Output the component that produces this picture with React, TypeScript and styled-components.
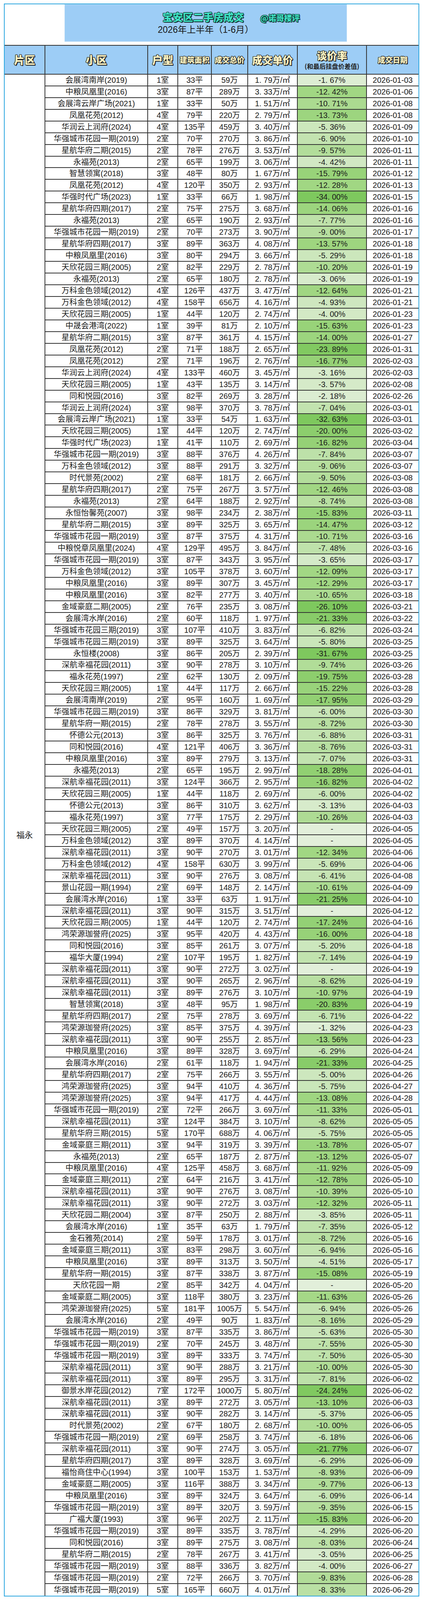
import React from 'react';
import styled, { createGlobalStyle } from 'styled-components';

// The browser window tops out at 4096px high and the photo is stretched to 4337,
// so every vertical size is laid out at 4096 / 4337 of its height in the picture.
const K = 4096 / 4337;
const v = (n: number) => `${(n * K).toFixed(2)}px`;

const GlobalStyle = createGlobalStyle`
  html, body {
    margin: 0;
    padding: 0;
    background: #ffffff;
    font-family: 'Liberation Sans', 'Noto Sans CJK SC', sans-serif;
    color: #1b1b1b;
  }
  * {
    box-sizing: border-box;
  }
`;

const COLS = '102px 263px 77px 86px 93px 127px 177px 134px';
const ROW_H = 31.72;
const LINE = '#333333';

// name|rooms|area|total|unit price|rate|date
const RAW = `会展湾南岸(2019)|1|33|59|1.79|-1.67|01-03
中粮凤凰里(2016)|3|87|289|3.33|-12.42|01-06
会展湾云岸广场(2021)|1|33|50|1.51|-10.71|01-08
凤凰花苑(2012)|4|79|220|2.79|-13.73|01-08
华润云上润府(2024)|4|135|459|3.40|-5.36|01-09
华强城市花园一期(2019)|2|70|270|3.86|-6.90|01-10
星航华府二期(2015)|2|78|276|3.53|-9.57|01-11
永福苑(2013)|2|65|199|3.06|-4.42|01-11
智慧领寓(2018)|3|48|80|1.67|-15.79|01-12
凤凰花苑(2012)|4|120|350|2.93|-12.28|01-13
华强时代广场(2023)|1|33|66|1.98|-34.00|01-15
星航华府四期(2017)|2|75|275|3.68|-14.06|01-16
永福苑(2013)|2|65|190|2.93|-7.77|01-16
华强城市花园一期(2019)|2|70|273|3.90|-9.00|01-17
星航华府四期(2017)|3|89|363|4.08|-13.57|01-18
中粮凤凰里(2016)|3|80|294|3.66|-5.29|01-18
天欣花园三期(2005)|2|82|229|2.78|-10.20|01-19
永福苑(2013)|2|65|180|2.78|-3.06|01-19
万科金色领域(2012)|4|126|437|3.47|-12.64|01-21
万科金色领域(2012)|4|158|656|4.16|-4.93|01-21
天欣花园三期(2005)|1|44|120|2.74|-4.00|01-23
中晟会港湾(2022)|1|39|81|2.10|-15.63|01-23
星航华府二期(2015)|3|87|361|4.15|-14.00|01-27
凤凰花苑(2012)|2|71|188|2.65|-23.89|01-31
凤凰花苑(2012)|2|71|196|2.76|-16.77|02-03
华润云上润府(2024)|4|133|460|3.45|-3.16|02-03
天欣花园三期(2005)|1|43|135|3.14|-3.57|02-08
同和悦园(2016)|3|82|269|3.28|-2.18|02-26
华润云上润府(2024)|3|98|370|3.78|-7.04|03-01
会展湾云岸广场(2021)|1|33|54|1.63|-32.63|03-01
天欣花园三期(2005)|1|44|120|2.74|-20.00|03-02
华强时代广场(2023)|1|41|110|2.69|-16.82|03-04
华强城市花园一期(2019)|3|88|376|4.26|-7.84|03-07
万科金色领域(2012)|3|88|291|3.32|-9.06|03-07
时代景苑(2002)|2|68|181|2.66|-9.50|03-08
星航华府四期(2017)|2|75|267|3.57|-12.46|03-08
永福苑(2013)|2|64|188|2.92|-8.74|03-08
永恒怡馨苑(2007)|3|98|234|2.38|-15.83|03-11
星航华府二期(2015)|3|89|325|3.65|-14.47|03-12
华强城市花园一期(2019)|3|87|375|4.31|-10.71|03-16
中粮悦章凤凰里(2024)|4|129|495|3.84|-7.48|03-16
华强城市花园一期(2019)|3|87|343|3.95|-3.65|03-17
万科金色领域(2012)|3|105|378|3.60|-12.09|03-17
中粮凤凰里(2016)|3|89|307|3.45|-12.29|03-17
中粮凤凰里(2016)|3|82|277|3.40|-10.65|03-18
金域豪庭二期(2005)|2|76|235|3.08|-26.10|03-21
会展湾水岸(2016)|2|60|118|1.97|-21.33|03-22
华强城市花园三期(2019)|3|107|410|3.83|-6.82|03-24
华强城市花园三期(2019)|3|89|325|3.64|-5.80|03-25
永恒楼(2008)|3|86|205|2.39|-31.67|03-25
深航幸福花园(2011)|3|90|278|3.10|-9.74|03-26
福永花苑(1997)|2|62|130|2.09|-19.75|03-28
天欣花园三期(2005)|1|44|117|2.66|-15.22|03-28
会展湾南岸(2019)|2|95|160|1.69|-17.95|03-29
华强城市花园三期(2019)|3|86|329|3.81|-6.00|03-30
星航华府一期(2015)|2|78|278|3.55|-8.72|03-30
怀德公元(2013)|3|86|325|3.76|-6.88|03-31
同和悦园(2016)|4|121|406|3.36|-8.76|03-31
中粮凤凰里(2016)|3|89|279|3.13|-7.07|03-31
永福苑(2013)|2|65|195|2.99|-18.28|04-01
深航幸福花园(2011)|3|124|366|2.95|-16.82|04-02
天欣花园三期(2005)|1|44|118|2.69|-6.00|04-02
怀德公元(2013)|3|86|310|3.62|-3.13|04-03
福永花苑(1997)|3|77|175|2.29|-10.26|04-03
天欣花园三期(2005)|2|49|157|3.20||04-05
万科金色领域(2012)|3|89|370|4.14||04-05
深航幸福花园(2011)|3|90|270|3.01|-12.34|04-06
万科金色领域(2012)|4|158|630|3.99|-5.69|04-06
深航幸福花园(2011)|3|90|276|3.08|-6.41|04-08
景山花园一期(1994)|2|69|148|2.14|-10.61|04-09
会展湾水岸(2016)|1|33|63|1.91|-21.25|04-10
深航幸福花园(2011)|3|90|315|3.51||04-12
天欣花园三期(2005)|1|44|120|2.74|-17.24|04-16
鸿荣源珈誉府(2025)|3|95|420|4.43|-16.00|04-18
同和悦园(2016)|3|85|261|3.07|-5.20|04-18
福华大厦(1994)|2|107|195|1.82|-7.14|04-19
深航幸福花园(2011)|3|90|272|3.02||04-19
深航幸福花园(2011)|3|90|265|2.96|-8.62|04-19
深航幸福花园(2011)|3|89|276|3.10|-10.97|04-19
智慧领寓(2018)|3|48|95|1.98|-20.83|04-19
星航华府四期(2017)|2|75|278|3.69|-6.71|04-22
鸿荣源珈誉府(2025)|3|85|375|4.39|-1.32|04-23
深航幸福花园(2011)|3|90|255|2.85|-13.56|04-23
中粮凤凰里(2016)|3|89|328|3.69|-6.29|04-24
会展湾水岸(2016)|2|61|118|1.94|-21.33|04-25
星航华府四期(2017)|2|75|266|3.55|-5.00|04-26
鸿荣源珈誉府(2025)|3|94|410|4.36|-5.75|04-27
鸿荣源珈誉府(2025)|3|94|417|4.44|-13.08|04-28
华强城市花园一期(2019)|2|72|266|3.69|-11.33|05-01
深航幸福花园(2011)|3|124|384|3.10|-8.62|05-05
星航华府三期(2015)|5|170|688|4.06|-5.75|05-05
金域豪庭三期(2011)|3|94|319|3.39|-13.78|05-07
永福苑(2013)|2|65|187|2.87|-13.12|05-07
中粮凤凰里(2016)|4|125|458|3.68|-11.92|05-09
金域豪庭三期(2011)|2|64|216|3.41|-12.78|05-10
深航幸福花园(2011)|3|90|276|3.08|-10.39|05-10
深航幸福花园(2011)|3|90|272|3.03|-12.32|05-11
天欣花园二期(2004)|3|87|250|2.88|-3.85|05-11
会展湾水岸(2016)|1|35|63|1.79|-7.35|05-12
金石雅苑(2014)|2|59|178|3.01|-8.72|05-16
金域豪庭三期(2011)|3|83|298|3.60|-6.94|05-16
中粮凤凰里(2016)|3|89|313|3.50|-4.51|05-17
星航华府一期(2015)|3|87|338|3.87|-15.08|05-19
天欣花园一期|2|85|342|4.04||05-20
金域豪庭二期(2005)|3|118|380|3.23|-11.63|05-26
鸿荣源珈誉府(2025)|5|181|1005|5.54|-6.94|05-26
会展湾水岸(2016)|2|49|90|1.83|-8.16|05-29
华强城市花园一期(2019)|3|87|335|3.86|-5.63|05-30
华强城市花园一期(2019)|2|70|245|3.48|-7.55|05-30
华强城市花园一期(2019)|3|89|333|3.74|-7.50|05-30
深航幸福花园(2011)|3|90|288|3.21|-10.00|05-30
深航幸福花园(2011)|3|89|295|3.31|-7.81|06-02
御景水岸花园(2012)|7|172|1000|5.80|-24.24|06-02
深航幸福花园(2011)|3|89|272|3.05|-13.10|06-03
深航幸福花园(2011)|3|90|282|3.14|-5.37|06-05
时代景苑(2002)|2|67|180|2.68|-10.00|06-05
华强城市花园一期(2019)|2|69|258|3.74|-6.18|06-06
深航幸福花园(2011)|3|90|274|3.05|-21.77|06-07
星航华府四期(2017)|3|89|328|3.69|-6.29|06-09
福怡商住中心(1994)|3|100|153|1.53|-8.93|06-09
金域豪庭二期(2005)|3|116|388|3.34|-9.77|06-13
中粮凤凰里(2016)|3|89|324|3.64|-6.09|06-14
华强城市花园一期(2019)|3|89|320|3.59|-9.35|06-15
广福大厦(1993)|3|96|202|2.11|-15.83|06-20
华强城市花园一期(2019)|3|89|335|3.78|-4.29|06-20
同和悦园(2016)|3|89|275|3.08|-8.03|06-24
星航华府二期(2015)|2|78|267|3.41|-3.05|06-25
华强城市花园一期(2019)|3|88|336|3.82|-4.00|06-27
华强城市花园一期(2019)|2|72|266|3.70|-9.83|06-28
华强城市花园一期(2019)|5|165|660|4.01|-8.33|06-29`;

interface Deal {
  name: string
  rooms: string
  area: string
  total: string
  price: string
  rate: string
  date: string
}

const deals: Deal[] = RAW.split('\n').map((line) => {
  const [name, rooms, area, total, price, rate, date] = line.split('|');
  return { name, rooms, area, total, price, rate, date };
});

// "1.79" -> "1. 79"
const spaced = (n: string) => n.replace('.', '. ');

// light -> mid at 12%, mid -> dark at 25%+
const rateColor = (rate: string) => {
  if (!rate) return 'rgb(226, 239, 218)';
  const val = Math.abs(parseFloat(rate));
  const light = [226, 239, 218];
  const mid = [162, 215, 132];
  const dark = [126, 200, 94];
  let from = light;
  let to = mid;
  let t = 0;
  if (val <= 12) {
    t = Math.pow(val / 12, 1.3);
  } else {
    from = mid;
    to = dark;
    t = Math.min(1, (val - 12) / 13);
  }
  const c = from.map((x, i) => Math.round(x + (to[i] - x) * t));
  return `rgb(${c[0]}, ${c[1]}, ${c[2]})`;
};

const outline = (c: string) =>
  `1px 0 0 ${c}, -1px 0 0 ${c}, 0 1px 0 ${c}, 0 -1px 0 ${c}, 1px 1px 0 ${c}, -1px -1px 0 ${c}, 1px -1px 0 ${c}, -1px 1px 0 ${c}, 2px 2px 0 ${c}`;

const Page = styled.div`
  padding: ${v(10)} 0 ${v(8)} 10px;
`;

const Frame = styled.div`
  width: 1063px;
  border: 2px solid #2ea7e0;
  background: #ffffff;
`;

const TitleBox = styled.div`
  width: 723px;
  height: ${v(101)};
  margin: 0 0 ${v(9)} 153px;
  background: #9dcdf6;
  border: 1px solid #c9e2f6;
  display: flex;
  flex-direction: column;
  align-items: center;
  justify-content: center;
  gap: ${v(5)};
`;

const TitleRow = styled.div`
  display: flex;
  align-items: flex-end;
  gap: 42px;
  padding-left: 130px;
`;

const MainTitle = styled.div`
  font-family: 'Noto Sans CJK SC', sans-serif;
  font-size: 26px;
  font-weight: 900;
  line-height: ${v(32)};
  color: #3fe2c4;
  text-shadow: ${outline('#0f2a2a')};
`;

const Handle = styled.div`
  font-family: 'Noto Sans CJK SC', sans-serif;
  font-size: 20px;
  font-weight: 900;
  line-height: ${v(26)};
  color: #3fe2c4;
  text-shadow: ${outline('#0f2a2a')};
`;

const SubTitle = styled.div`
  font-size: 23px;
  line-height: ${v(28)};
  color: #1a1a1a;
`;

const HeadRow = styled.div`
  display: grid;
  grid-template-columns: ${COLS};
  grid-template-rows: ${v(80)};
`;

const Body = styled.div`
  display: grid;
  grid-template-columns: ${COLS};
  grid-auto-rows: ${v(ROW_H)};
`;

const HeadCell = styled.div<{ $first?: boolean }>`
  background: #9dcdf6;
  border-top: 2px solid ${LINE};
  border-bottom: 2px solid ${LINE};
  border-left: ${(p) => (p.$first ? 'none' : `2px solid ${LINE}`)};
  display: flex;
  flex-direction: column;
  align-items: center;
  justify-content: center;
  gap: ${v(6)};
  overflow: hidden;
`;

const HeadLabel = styled.div<{ $size: number }>`
  font-family: 'Noto Sans CJK SC', sans-serif;
  font-size: ${(p) => p.$size}px;
  font-weight: 900;
  line-height: 1.05;
  color: #fff6c6;
  text-shadow: ${outline('#1c1c1c')};
  white-space: nowrap;
`;

const HeadNote = styled.div`
  font-family: 'Noto Sans CJK SC', sans-serif;
  font-size: 16px;
  font-weight: 700;
  line-height: 1.05;
  color: #222222;
  white-space: nowrap;
`;

const District = styled.div`
  grid-column: 1;
  grid-row: 1 / span ${deals.length};
  display: flex;
  align-items: center;
  justify-content: center;
  font-size: 21px;
  line-height: 1;
  color: #1b1b1b;
`;

const Cell = styled.div`
  min-height: 0;
  border-left: 2px solid ${LINE};
  border-bottom: 2px solid ${LINE};
  display: flex;
  align-items: center;
  justify-content: center;
  font-size: 20px;
  line-height: 1;
  white-space: nowrap;
  overflow: hidden;

  &:nth-last-child(-n + 7) {
    border-bottom: none;
  }
`;

const headers: { label: string; size: number; note?: string }[] = [
  { label: '片区', size: 27 },
  { label: '小区', size: 27 },
  { label: '户型', size: 27 },
  { label: '建筑面积', size: 19 },
  { label: '成交总价', size: 19 },
  { label: '成交单价', size: 26 },
  { label: '谈价率', size: 26, note: '(和最后挂盘价差值)' },
  { label: '成交日期', size: 19 },
];

const App: React.FC = () => (
  <Page>
    <GlobalStyle />
    <Frame>
      <TitleBox>
        <TitleRow>
          <MainTitle>宝安区二手房成交</MainTitle>
          <Handle>@诺哥楼评</Handle>
        </TitleRow>
        <SubTitle>2026年上半年（1-6月）</SubTitle>
      </TitleBox>

      <HeadRow>
        {headers.map((h, i) => (
          <HeadCell key={h.label} $first={i === 0}>
            <HeadLabel $size={h.size}>{h.label}</HeadLabel>
            {h.note && <HeadNote>{h.note}</HeadNote>}
          </HeadCell>
        ))}
      </HeadRow>

      <Body>
        <District>福永</District>
        {deals.map((d, i) => (
          <React.Fragment key={i}>
            <Cell>{d.name}</Cell>
            <Cell>{d.rooms}室</Cell>
            <Cell>{d.area}平</Cell>
            <Cell>{d.total}万</Cell>
            <Cell>{spaced(d.price)}万/㎡</Cell>
            <Cell style={{ background: rateColor(d.rate) }}>
              {d.rate ? `${spaced(d.rate)}%` : '-'}
            </Cell>
            <Cell>2026-{d.date}</Cell>
          </React.Fragment>
        ))}
      </Body>
    </Frame>
  </Page>
);

export default App;
